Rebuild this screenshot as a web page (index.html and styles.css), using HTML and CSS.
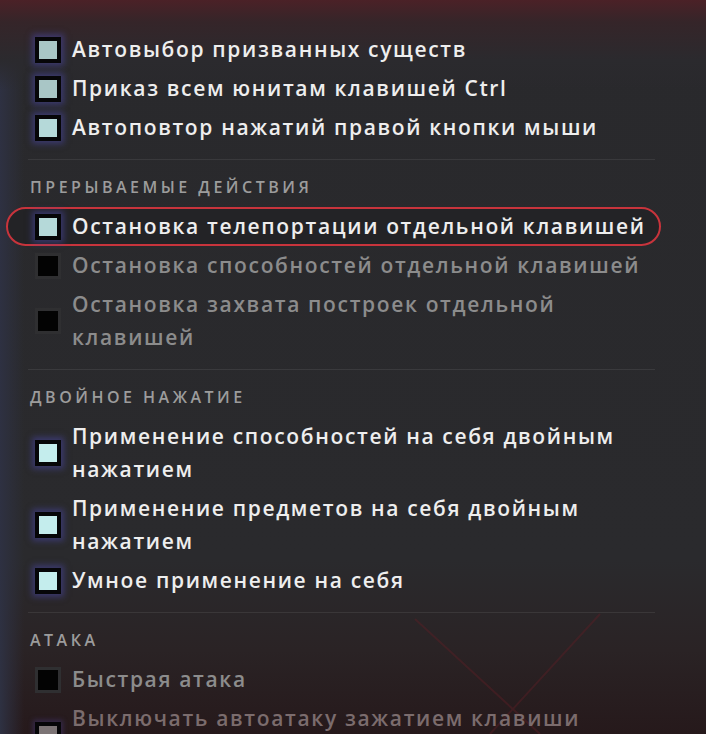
FILE: index.html
```html
<!DOCTYPE html>
<html lang="ru">
<head>
    <meta charset="UTF-8">
    <meta name="viewport" content="width=device-width, initial-scale=1.0">
    <title>Настройки управления</title>
    <link rel="stylesheet" href="styles.css">
</head>
<body>
    <div class="fon">
        <svg class="krest" width="706" height="160" viewBox="0 0 706 160">
            <path d="M415 45 L540 160 M600 40 L490 160" stroke="#5a1f25" stroke-width="2" fill="none" opacity="0.45"/>
        </svg>
    </div>
    <div id="painel">
        <div class="grupo">
            <div class="opcao">
                <span class="caixa cinza"></span>
                <span class="texto">Автовыбор призванных существ</span>
            </div>
            <div class="opcao">
                <span class="caixa cinza"></span>
                <span class="texto">Приказ всем юнитам клавишей Ctrl</span>
            </div>
            <div class="opcao">
                <span class="caixa"></span>
                <span class="texto">Автоповтор нажатий правой кнопки мыши</span>
            </div>
        </div>

        <div class="linha"></div>
        <p class="titulo">Прерываемые действия</p>
        <div class="grupo">
            <div class="opcao marcada">
                <span class="aro"></span>
                <span class="caixa"></span>
                <span class="texto">Остановка телепортации отдельной клавишей</span>
            </div>
            <div class="opcao desligada">
                <span class="caixa vazia"></span>
                <span class="texto">Остановка способностей отдельной клавишей</span>
            </div>
            <div class="opcao desligada">
                <span class="caixa vazia"></span>
                <span class="texto">Остановка захвата построек отдельной<br>клавишей</span>
            </div>
        </div>

        <div class="linha"></div>
        <p class="titulo">Двойное нажатие</p>
        <div class="grupo">
            <div class="opcao">
                <span class="caixa clara"></span>
                <span class="texto">Применение способностей на себя двойным<br>нажатием</span>
            </div>
            <div class="opcao">
                <span class="caixa clara"></span>
                <span class="texto">Применение предметов на себя двойным<br>нажатием</span>
            </div>
            <div class="opcao">
                <span class="caixa clara"></span>
                <span class="texto">Умное применение на себя</span>
            </div>
        </div>

        <div class="linha"></div>
        <p class="titulo">Атака</p>
        <div class="grupo">
            <div class="opcao desligada">
                <span class="caixa vazia"></span>
                <span class="texto">Быстрая атака</span>
            </div>
            <div class="opcao desligada escura">
                <span class="caixa parda"></span>
                <span class="texto">Выключать автоатаку зажатием клавиши<br>&nbsp;</span>
            </div>
        </div>
    </div>
</body>
</html>
```
FILE: styles.css
```css
html, body {
    margin: 0;
    padding: 0;
    height: 734px;
    overflow: hidden;
}

body {
    font-family: "Open Sans", "Noto Sans", sans-serif;
    background:
        linear-gradient(to bottom, #4b2127 0px, #352529 22px, #2b2a2e 60px, rgba(43, 42, 46, 0) 90px),
        linear-gradient(to right, #2e3142 0px, rgba(44, 44, 52, 0) 24px),
        linear-gradient(to bottom, #29292c 0px, #2a2a2d 560px, #2a2325 650px, #26191b 734px);
    position: relative;
}

.fon {
    position: absolute;
    left: 0;
    bottom: 0;
    width: 706px;
    height: 160px;
    pointer-events: none;
}

.krest {
    display: block;
}

#painel {
    position: relative;
    width: 627px;
    margin-left: 28px;
    padding-top: 30px;
}

.grupo {
    display: flex;
    flex-direction: column;
}

.opcao {
    position: relative;
    display: flex;
    align-items: center;
    gap: 11px;
    padding: 3px 0 3px 7px;
    color: #eeeeee;
    font-size: 21px;
    font-weight: 600;
    line-height: 33px;
    letter-spacing: 1.65px;
    white-space: nowrap;
}

.opcao .texto {
    position: relative;
}

.desligada {
    color: #8c8c8c;
}

.escura {
    color: #7b6c6d;
}

.caixa {
    position: relative;
    flex: none;
    width: 18px;
    height: 18px;
    border: 4px solid #060608;
    background: #b5d9d9;
    box-shadow: 0 0 6px 3px rgba(74, 72, 170, 0.5);
}

.caixa.cinza {
    background: #a9c6c6;
}

.caixa.clara {
    background: #c4eded;
}

.caixa.vazia {
    background: #030303;
    border: 3px solid #2f2f31;
    width: 20px;
    height: 20px;
    box-shadow: none;
}

.caixa.parda {
    background: #7c7475;
    box-shadow: 0 0 5px 2px rgba(74, 60, 130, 0.45);
}

.marcada .aro {
    position: absolute;
    left: -22px;
    right: -6px;
    top: 0;
    bottom: 0;
    border: 2px solid #c8343c;
    border-radius: 20px;
    background: #232326;
}

.linha {
    height: 1px;
    margin-top: 12px;
    background: rgba(255, 255, 255, 0.08);
}

.titulo {
    margin: 0;
    padding: 17px 0 10px 2px;
    line-height: 20px;
    font-size: 16px;
    font-weight: 600;
    letter-spacing: 3.5px;
    text-transform: uppercase;
    color: #9c9c9c;
}
```
